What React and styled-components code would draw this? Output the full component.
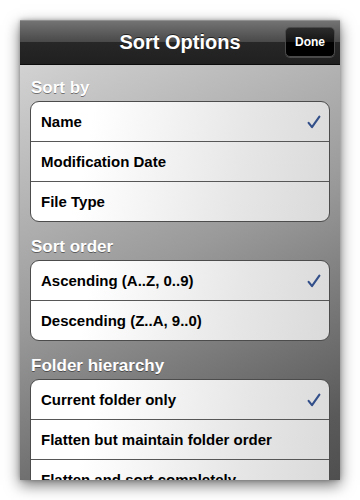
import React, { useState } from 'react';
import styled, { createGlobalStyle } from 'styled-components';

const GlobalStyle = createGlobalStyle`
  html, body {
    margin: 0;
    padding: 0;
    background: #ffffff;
  }
  body {
    font-family: "Liberation Sans", Arial, Helvetica, sans-serif;
    -webkit-font-smoothing: antialiased;
  }
`;

const sections = [
  {
    key: 'sortBy',
    title: 'Sort by',
    options: ['Name', 'Modification Date', 'File Type'],
  },
  {
    key: 'order',
    title: 'Sort order',
    options: ['Ascending (A..Z, 0..9)', 'Descending (Z..A, 9..0)'],
  },
  {
    key: 'hierarchy',
    title: 'Folder hierarchy',
    options: ['Current folder only', 'Flatten but maintain folder order', 'Flatten and sort completely'],
  },
];

const CheckMark = () => (
  <svg width="14" height="14" viewBox="0 0 14 14">
    <path
      d="M1.6 7.8 L5 12.2 L12.4 1.6"
      fill="none"
      stroke="#34508a"
      strokeWidth="2.1"
      strokeLinecap="round"
      strokeLinejoin="round"
    />
  </svg>
);

const App = () => {
  const [selected, setSelected] = useState({ sortBy: 0, order: 0, hierarchy: 0 });

  return (
    <>
      <GlobalStyle />
      <Page>
        <Panel>
          <NavBar>
            <Title>Sort Options</Title>
            <DoneButton>Done</DoneButton>
          </NavBar>
          <Content>
            {sections.map((section, i) => (
              <Section key={section.key} first={i === 0}>
                <SectionTitle>{section.title}</SectionTitle>
                <Group>
                  {section.options.map((opt, idx) => (
                    <Row
                      key={opt}
                      onClick={() => setSelected({ ...selected, [section.key]: idx })}
                    >
                      <span>{opt}</span>
                      {selected[section.key] === idx && <CheckMark />}
                    </Row>
                  ))}
                </Group>
              </Section>
            ))}
          </Content>
        </Panel>
      </Page>
    </>
  );
};

const Page = styled.div`
  width: 360px;
  height: 500px;
  padding: 20px;
  box-sizing: border-box;
`;

const Panel = styled.div`
  width: 320px;
  height: 460px;
  display: flex;
  flex-direction: column;
  overflow: hidden;
  box-shadow: 0 5px 14px rgba(0, 0, 0, 0.55), 0 0 4px rgba(0, 0, 0, 0.25);
`;

const NavBar = styled.div`
  position: relative;
  flex: 0 0 43px;
  display: flex;
  align-items: center;
  justify-content: center;
  border-top: 1px solid #909090;
  border-bottom: 1px solid #0c0c0c;
  background: linear-gradient(
    to bottom,
    #737373 0%,
    #4a4a4a 48%,
    #272727 50%,
    #202020 100%
  );
`;

const Title = styled.div`
  color: #ffffff;
  font-size: 20px;
  font-weight: bold;
  text-shadow: 0 -1px 0 rgba(0, 0, 0, 0.6);
`;

const DoneButton = styled.button`
  position: absolute;
  right: 5px;
  top: 6px;
  width: 50px;
  height: 30px;
  padding: 0;
  border: 1px solid #4a4a4a;
  border-radius: 5px;
  background: linear-gradient(to bottom, #2c2c2c 0%, #141414 50%, #000000 51%, #000000 100%);
  box-shadow: 0 1px 0 rgba(255, 255, 255, 0.18);
  color: #ffffff;
  font-family: "Liberation Sans", Arial, sans-serif;
  font-size: 12px;
  font-weight: bold;
  cursor: pointer;
`;

const Content = styled.div`
  flex: 1;
  padding: 0 10px;
  background: linear-gradient(155deg, #d2d2d2 0%, #9a9a9a 45%, #5a5a5a 85%, #4c4c4c 100%);
`;

const Section = styled.div`
  margin-top: ${(p) => (p.first ? '13px' : '15px')};
`;

const SectionTitle = styled.div`
  padding: 0 1px;
  margin-bottom: 3px;
  line-height: 20px;
  font-size: 17px;
  font-weight: bold;
  color: #ffffff;
  text-shadow: 0 1px 0 rgba(0, 0, 0, 0.45);
`;

const Group = styled.div`
  border: 1px solid #4c4c4c;
  border-radius: 9px;
  overflow: hidden;
  background: linear-gradient(100deg, #ffffff 20%, #e6e6e6 70%, #dadada 100%);
`;

const Row = styled.div`
  height: 39px;
  display: flex;
  align-items: center;
  justify-content: space-between;
  padding: 0 8px 0 10px;
  font-size: 15px;
  font-weight: bold;
  color: #000000;
  cursor: pointer;

  & + & {
    border-top: 1px solid #575757;
  }
`;

export default App;
